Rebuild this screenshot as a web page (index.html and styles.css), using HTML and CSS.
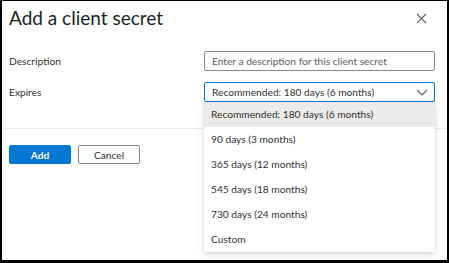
FILE: index.html
```html
<!DOCTYPE html>
<html lang="en">
<head>
    <meta charset="UTF-8">
    <meta name="viewport" content="width=device-width, initial-scale=1.0">
    <title>Add a client secret</title>
    <link rel="stylesheet" href="styles.css">
</head>
<body>
    <div class="panel">
        <div class="panel-header">
            <h1>Add a client secret</h1>
            <button class="close" aria-label="Close">
                <svg width="11" height="11" viewBox="0 0 11 11">
                    <path d="M1 1L10 10M10 1L1 10" stroke="#605e5c" stroke-width="1.1" fill="none"/>
                </svg>
            </button>
        </div>

        <div class="form">
            <div class="form-row">
                <label for="description">Description</label>
                <input id="description" type="text" placeholder="Enter a description for this client secret">
            </div>
            <div class="form-row">
                <label>Expires</label>
                <div class="select-wrap">
                    <div class="select">
                        <span>Recommended: 180 days (6 months)</span>
                        <svg width="12" height="7" viewBox="0 0 12 7">
                            <path d="M1 1L6 6L11 1" stroke="#605e5c" stroke-width="1.1" fill="none"/>
                        </svg>
                    </div>
                    <ul class="menu">
                        <li class="selected">Recommended: 180 days (6 months)</li>
                        <li>90 days (3 months)</li>
                        <li>365 days (12 months)</li>
                        <li>545 days (18 months)</li>
                        <li>730 days (24 months)</li>
                        <li>Custom</li>
                    </ul>
                </div>
            </div>
        </div>

        <div class="footer">
            <button class="btn btn-primary">Add</button>
            <button class="btn">Cancel</button>
        </div>
    </div>
</body>
</html>
```

FILE: styles.css
```css
* {
    box-sizing: border-box;
    margin: 0;
    padding: 0;
}

body {
    font-family: Lato, 'Open Sans', sans-serif;
    color: #323130;
    background: #fff;
    width: 449px;
    height: 263px;
    overflow: hidden;
}

.panel {
    height: 263px;
    border: 2px solid #000;
    border-top-width: 1px;
    border-bottom-width: 3px;
    padding-right: 9px;
    position: relative;
}

.panel-header {
    display: flex;
    justify-content: space-between;
    align-items: center;
    padding: 3px 0 0 7px;
    height: 30px;
}

h1 {
    font-size: 19px;
    font-weight: 400;
    line-height: 26px;
    color: #201f1e;
}

.close {
    background: none;
    border: none;
    width: 20px;
    height: 20px;
    display: flex;
    align-items: center;
    justify-content: center;
    margin-right: 7px;
    margin-top: 2px;
}

.form {
    padding: 20px 0 0 7px;
    display: flex;
    flex-direction: column;
    gap: 11px;
    height: 98px;
    border-bottom: 1px solid #edebe9;
    margin-right: -9px;
    padding-right: 9px;
}

.form-row {
    display: grid;
    grid-template-columns: 195px 231px;
    align-items: center;
    font-size: 10.2px;
}

label {
    font-size: 10.2px;
}

input, .select {
    height: 20px;
    border: 1px solid #8a8886;
    border-radius: 2px;
    font-family: inherit;
    font-size: 10.2px;
    padding: 0 7px;
    color: #323130;
}

input::placeholder {
    color: #605e5c;
}

.select-wrap {
    position: relative;
}

.select {
    display: flex;
    justify-content: space-between;
    align-items: center;
    border-color: #0078d4;
    padding-right: 6px;
}

.menu {
    position: absolute;
    top: 20px;
    left: 0;
    width: 231px;
    list-style: none;
    background: #fff;
    box-shadow: 0 3px 7px rgba(0, 0, 0, 0.13), 0 0 2px rgba(0, 0, 0, 0.1);
    z-index: 2;
}

.menu li {
    height: 25px;
    line-height: 25px;
    padding: 0 7px;
    font-size: 10.2px;
}

.menu li.selected {
    background: #edebe9;
}

.footer {
    display: flex;
    gap: 7px;
    padding: 16px 0 0 7px;
}

.btn {
    width: 62px;
    height: 19px;
    border: 1px solid #8a8886;
    border-radius: 2px;
    background: #fff;
    font-family: inherit;
    font-size: 10.2px;
    color: #323130;
}

.btn-primary {
    background: #0078d4;
    border-color: #0078d4;
    color: #fff;
    font-weight: 700;
}
```
